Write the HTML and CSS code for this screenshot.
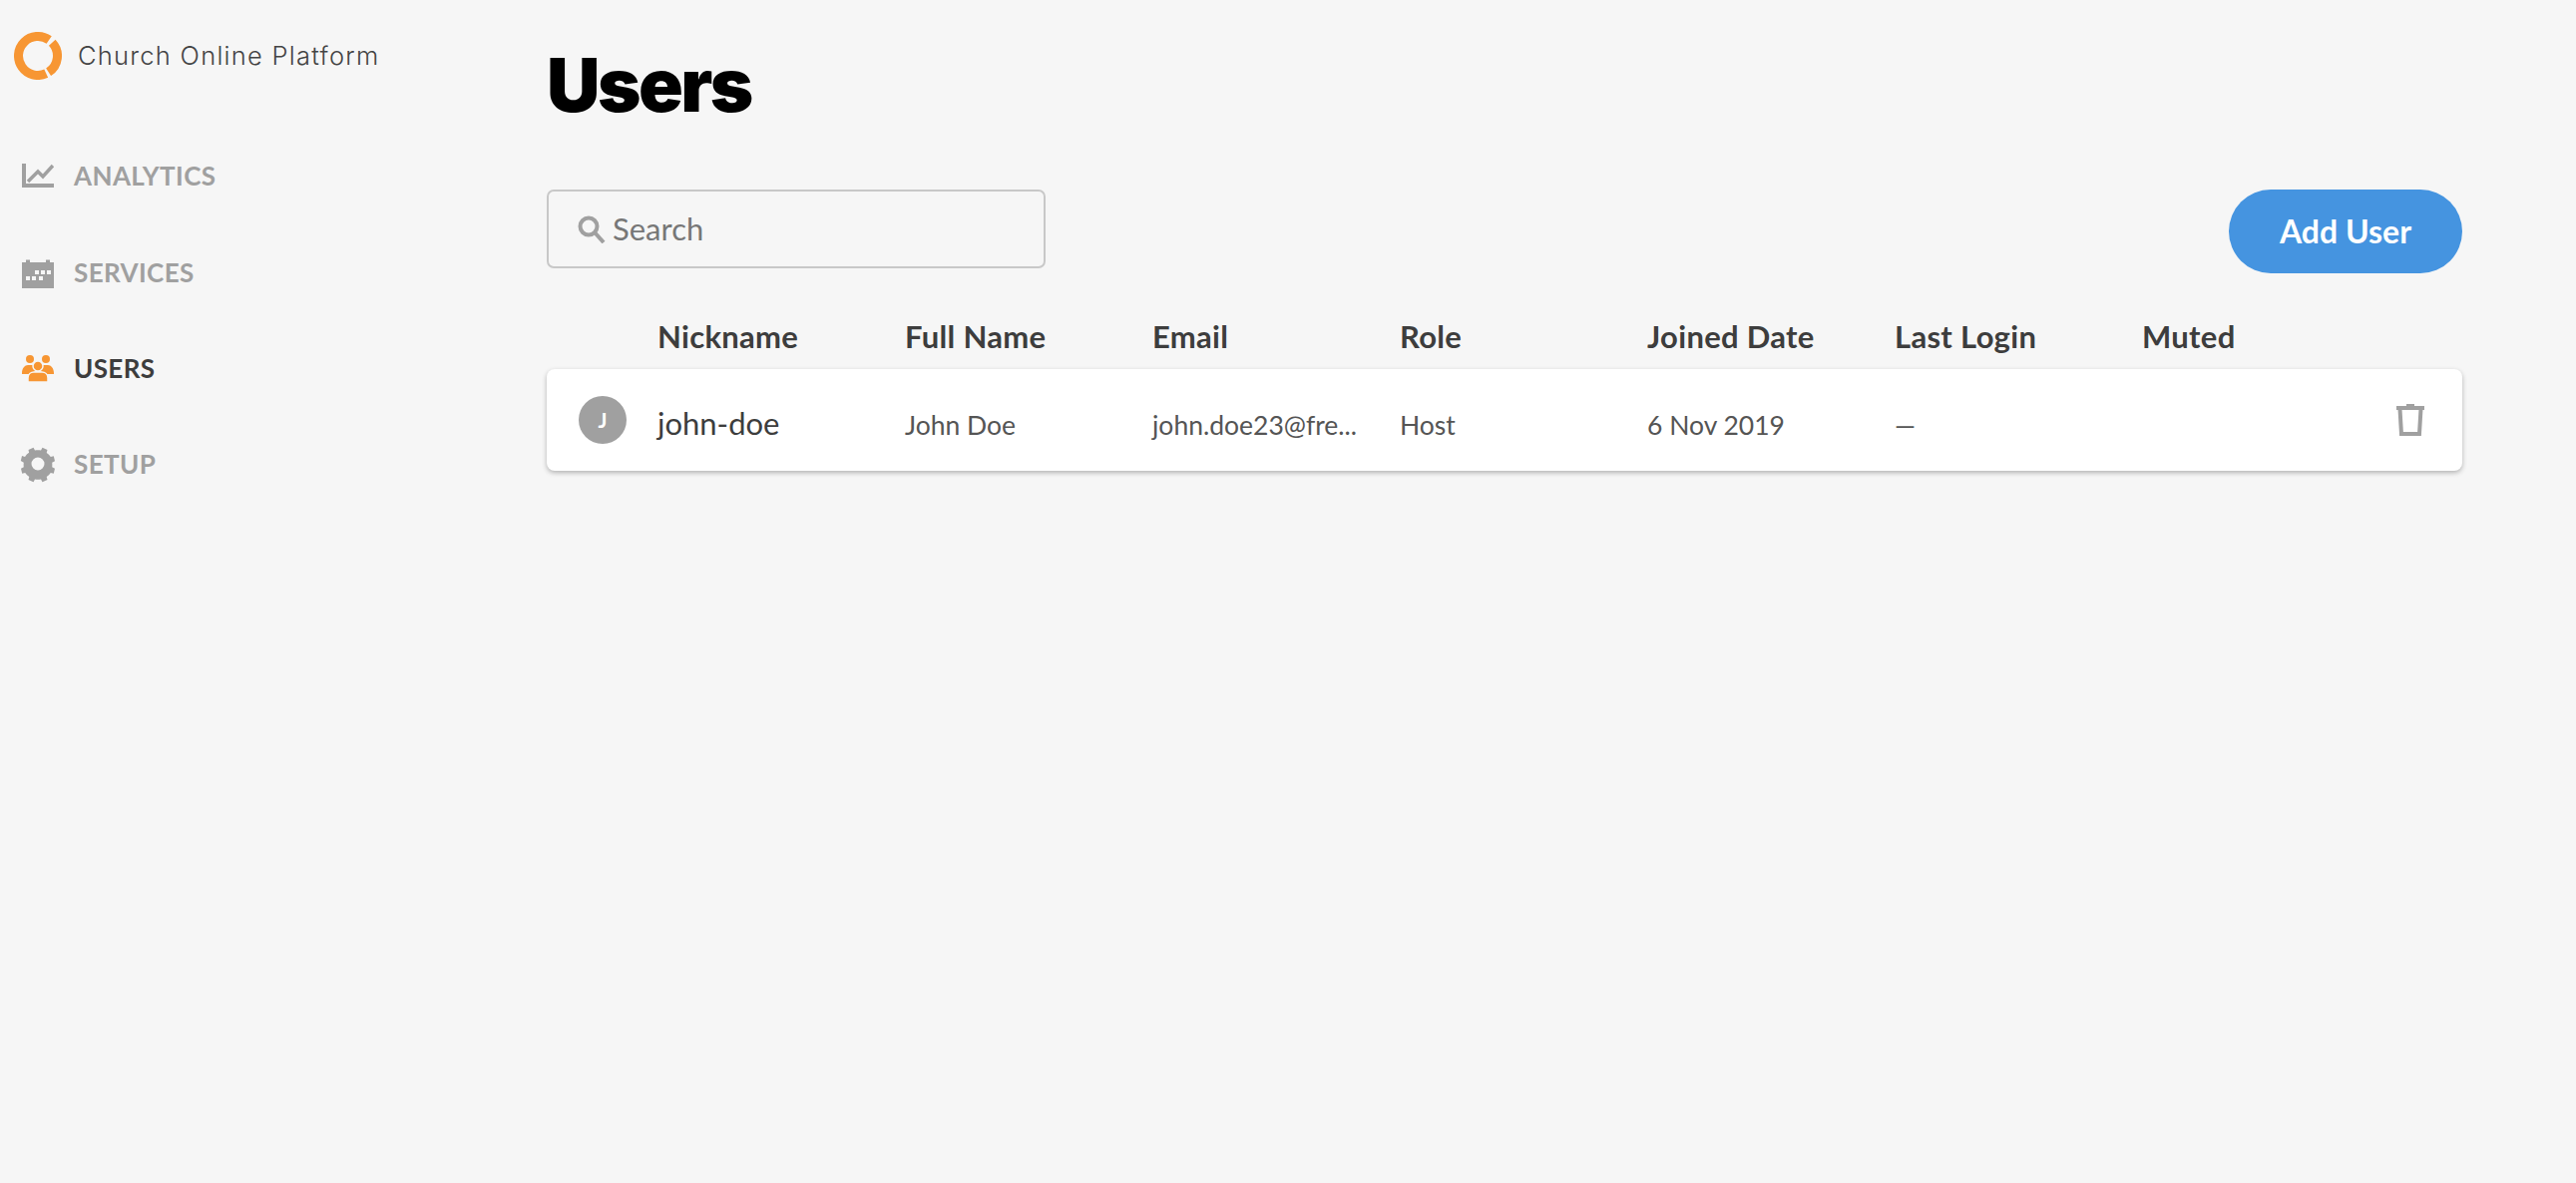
FILE: index.html
```html
<!DOCTYPE html>
<html lang="en">
<head>
<meta charset="utf-8">
<title>Users</title>
<link rel="stylesheet" href="styles.css">
</head>
<body>
<div class="app">
  <aside class="sidebar">
    <div class="brand">
      <svg class="logo" viewBox="0 0 48 48"><path d="M32.24 41.67A19.5 19.5 0 1 1 35.18 8.03" /><path d="M38.26 10.7A19.5 19.5 0 0 1 34.62 40.35" /></svg>
      <span class="brand-name">Church Online Platform</span>
    </div>
    <nav class="nav">
      <a class="nav-item">
        <svg class="nav-icon" viewBox="0 0 32 32"><path d="M0 4h4v20h28v4H0z"/><polyline class="spark" points="6,22 16,12 21,17 31,6"/></svg>
        <span>ANALYTICS</span>
      </a>
      <a class="nav-item">
        <svg class="nav-icon" viewBox="0 0 32 32"><path fill-rule="evenodd" d="M0 6h4V3.500h4V6h16V3.500h4V6h4v26H0zM13 14v4h4v-4zM19 14v4h4v-4zM25 14v4h4v-4zM4 20v4h4v-4zM10 20v4h4v-4zM17 20v4h4v-4z"/></svg>
        <span>SERVICES</span>
      </a>
      <a class="nav-item active">
        <svg class="nav-icon" viewBox="0 0 32 32"><circle cx="8" cy="7" r="4"/><circle cx="24" cy="7" r="4"/><path d="M0 21c0-5 3-8 6-8h4c1 0 2 .5 3 1-1 2 0 4 1 5-3 1-5 2-6 3H0z"/><path d="M32 21c0-5-3-8-6-8h-4c-1 0-2 .5-3 1 1 2 0 4-1 5 3 1 5 2 6 3h8z"/><path class="cut" d="M6 30v-4c0-4 3-6 6-6h8c3 0 6 2 6 6v4z"/><circle class="cut" cx="16" cy="14" r="5"/></svg>
        <span>USERS</span>
      </a>
      <a class="nav-item">
        <svg class="nav-icon gear" viewBox="0 0 34 34"><path fill-rule="evenodd" d="M12.500.8L14 3.500c2-.4 4-.4 6 0L21.500.8l5 2.200-.8 3c1.600 1.100 3 2.500 4.100 4.100l3-.8 1.200 5-2.800 1.400c.2 1.800.2 2.800 0 4.600l2.800 1.400-1.200 5-3-.8c-1.100 1.600-2.500 3-4.100 4.100l.8 3-5 2.200-1.500-2.700c-2 .4-4 .4-6 0l-1.500 2.700-5-2.200.8-3c-1.600-1.100-3-2.500-4.100-4.100l-3 .8-1.200-5 2.800-1.400c-.2-1.800-.2-2.800 0-4.600L-.2 14.100 1 9.100l3 .8C5.100 8.300 6.500 6.900 8.100 5.800l-.6-2.800zM17 10.500a6.500 6.500 0 1 0 0 13 6.500 6.500 0 0 0 0-13z"/></svg>
        <span>SETUP</span>
      </a>
    </nav>
  </aside>
  <main class="main">
    <h1 class="title">Users</h1>
    <div class="toolbar">
      <label class="search">
        <svg class="search-icon" viewBox="0 0 28 28"><circle cx="11" cy="11" r="8.500"/><path d="M17 17l9 10"/></svg>
        <span class="search-text">Search</span>
      </label>
      <button class="add-btn">Add User</button>
    </div>
    <div class="cols head">
      <div></div>
      <div>Nickname</div>
      <div>Full Name</div>
      <div>Email</div>
      <div>Role</div>
      <div>Joined Date</div>
      <div>Last Login</div>
      <div>Muted</div>
      <div></div>
    </div>
    <div class="cols row">
      <div class="avatar">J</div>
      <div class="cell nick">john-doe</div>
      <div class="cell">John Doe</div>
      <div class="cell">john.doe23@fre...</div>
      <div class="cell">Host</div>
      <div class="cell">6 Nov 2019</div>
      <div class="cell">—</div>
      <div></div>
      <div class="actions">
        <svg class="trash" viewBox="0 0 28 32"><path d="M10 0h8v2h10v4H0V2h10z"/><path class="trash-body" d="M3.500 5l1.500 25h18l1.500-25"/></svg>
      </div>
    </div>
  </main>
</div>
</body>
</html>
```
FILE: styles.css
```css
* { box-sizing: border-box; }
html, body { margin: 0; height: 100%; }
body {
  background: #f6f6f6;
  color: #3d3d3d;
  font-family: "Lato", "Liberation Sans", sans-serif;
}
.app { display: flex; min-height: 100%; }

.sidebar { width: 548px; flex: none; padding: 32px 0 0 14px; }
.brand { display: flex; align-items: center; gap: 16px; height: 48px; }
.logo { width: 48px; height: 48px; fill: none; stroke: #f79633; stroke-width: 9; }
.brand-name {
  margin-top: -2px;
  font-family: "Inter", "Lato", sans-serif;
  font-size: 25.500px;
  font-weight: 300;
  letter-spacing: 1.250px;
  color: #444;
}

.nav { margin-top: 48px; margin-left: -14px; display: flex; flex-direction: column; }
.nav-item {
  display: flex;
  align-items: center;
  gap: 20px;
  height: 96.4px;
  padding-left: 22px;
  font-size: 26px;
  font-weight: 700;
  letter-spacing: 0.4px;
  color: #a0a0a0;
}
.nav-item.active { color: #3d3d3d; }
.nav-icon { width: 32px; height: 32px; fill: #a0a0a0; flex: none; }
.nav-icon.gear { width: 34px; height: 34px; margin: 0 -1px; overflow: visible; }
.spark { fill: none; stroke: #a0a0a0; stroke-width: 3.500; }
.nav-item.active .nav-icon { fill: #f79633; }
.cut { stroke: #f6f6f6; stroke-width: 1.500; }

.main { flex: 1; padding: 40px 114px 0 0; }
.title {
  margin: 0;
  height: 150px;
  font-family: "Inter", "Lato", sans-serif;
  font-size: 74px;
  line-height: 90px;
  font-weight: 900;
  letter-spacing: -2.500px;
  color: #000;
}
.toolbar { display: flex; justify-content: space-between; align-items: flex-start; height: 84px; }
.search {
  display: flex;
  align-items: center;
  gap: 7px;
  width: 500px;
  height: 79px;
  padding-left: 29px;
  border: 2px solid #c8c8c8;
  border-radius: 7px;
}
.search-icon { width: 28px; height: 28px; fill: none; stroke: #a0a0a0; stroke-width: 4; }
.search-text { margin-top: -2px; font-size: 31px; color: #777; }
.add-btn {
  width: 234px;
  height: 84px;
  padding-bottom: 2px;
  border: 0;
  border-radius: 42px;
  background: #4594e0;
  color: #fff;
  font: 700 32px "Lato", "Liberation Sans", sans-serif;
}

.cols {
  display: grid;
  grid-template-columns: 111px repeat(7, 248px) 1fr;
  align-items: center;
}
.head {
  height: 96px;
  padding-bottom: 15px;
  align-items: end;
  font-size: 31px;
  font-weight: 700;
  letter-spacing: 0.3px;
  line-height: 36px;
}
.row {
  height: 102px;
  background: #fff;
  border-radius: 8px;
  box-shadow: 0 2px 5px rgba(0, 0, 0, 0.28);
  font-size: 26.500px;
  color: #555;
}
.cell { padding-top: 10px; }
.avatar {
  width: 48px;
  height: 48px;
  margin-left: 32px;
  border-radius: 50%;
  background: #a0a0a0;
  color: #fff;
  font-size: 21px;
  font-weight: 700;
  line-height: 48px;
  text-align: center;
}
.nick { padding-top: 6px; font-size: 31px; color: #3d3d3d; }
.actions { display: flex; padding-left: 7px; }
.trash { width: 28px; height: 32px; fill: #a0a0a0; }
.trash-body { fill: none; stroke: #a0a0a0; stroke-width: 4; }
```
